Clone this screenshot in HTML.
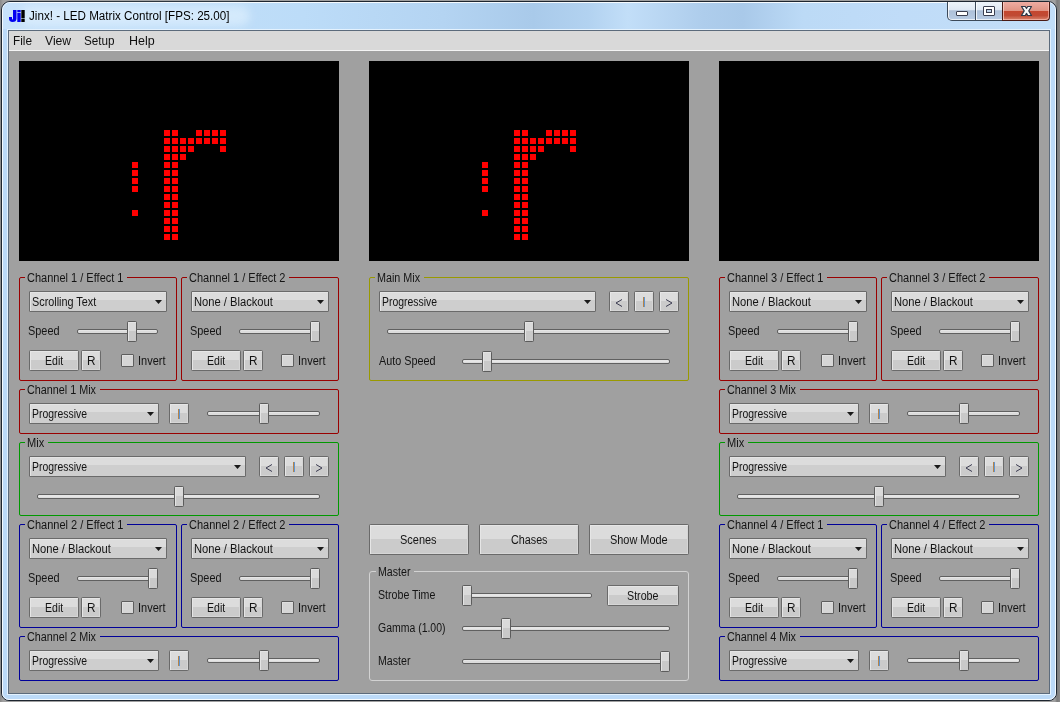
<!DOCTYPE html>
<html><head><meta charset="utf-8"><style>
html,body{margin:0;padding:0;}
body{width:1060px;height:702px;overflow:hidden;position:relative;background:#8c8c8c;font-family:"Liberation Sans",sans-serif;}
.t{position:absolute;white-space:nowrap;line-height:14px;transform-origin:0 0;}
</style></head><body>

<div style="position:absolute;left:0;top:0;width:1060px;height:702px;background:linear-gradient(90deg,#8a8a8a,#a0a0a0 3px,#a0a0a0 1055px,#7c7c7c 1057px,#8a8a8a)"></div>
<div style="position:absolute;left:1px;top:1px;width:1056px;height:700px;box-sizing:border-box;border:1px solid #1e2630;border-radius:9px 9px 8px 8px;background:#bcdaf8;"></div>
<div style="position:absolute;left:2px;top:2px;width:1054px;height:698px;box-sizing:border-box;border:1px solid rgba(255,255,255,0.85);border-radius:8px 8px 7px 7px;"></div>
<div style="position:absolute;left:3px;top:3px;width:1052px;height:26px;border-radius:7px 7px 0 0;background:linear-gradient(90deg,#c8e2fa 0,#bcdcf8 300px,#b4d4f2 440px,#a9caea 530px,#b2d2f0 585px,#c2def8 625px,#aecdec 700px,#a9c9e9 740px,#bcdaf6 800px,#c0dcf8 900px,#c2def8 1054px);"></div>
<div style="position:absolute;left:20px;top:6px;width:230px;height:20px;border-radius:10px;background:rgba(230,244,255,0.55);filter:blur(4px)"></div>
<div style="position:absolute;left:7px;top:29px;width:1044px;height:666px;box-sizing:border-box;border:1px solid #e4f2fe;"></div>
<div style="position:absolute;left:8px;top:30px;width:1042px;height:664px;box-sizing:border-box;border:1px solid #5c6b7c;background:#a0a0a0;"></div>
<div style="position:absolute;left:9px;top:31px;width:1040px;height:19px;background:#d9d9d9;"></div>
<div style="position:absolute;left:9px;top:50px;width:1040px;height:1px;background:#f4f4f4;"></div>
<div class="t" style="left:13.30px;top:34px;font-size:12px;transform:scaleX(0.9825);color:#101010;">File</div>
<div class="t" style="left:45.00px;top:34px;font-size:12px;transform:scaleX(1.0118);color:#101010;">View</div>
<div class="t" style="left:84.30px;top:34px;font-size:12px;transform:scaleX(0.9757);color:#101010;">Setup</div>
<div class="t" style="left:128.50px;top:34px;font-size:12px;transform:scaleX(1.0413);color:#101010;">Help</div>
<svg style="position:absolute;left:0;top:0" width="30" height="26">
<path d="M13,10 H16.5 V18.5 Q16.5,22 12.5,22 Q9,22 9,18.2 V17 H12 V18.2 Q12,19.5 12.7,19.5 Q13,19.5 13,18.2 Z" fill="#0000f0"/>
<rect x="17.3" y="10" width="3.4" height="2.3" fill="#0000f0"/><rect x="17.3" y="13" width="3.4" height="9" fill="#0000f0"/>
<rect x="21.3" y="10" width="3.4" height="8.4" fill="#000"/><rect x="21.3" y="19" width="3.4" height="3" fill="#000"/>
</svg>
<div class="t" style="left:28.70px;top:9px;font-size:12px;transform:scaleX(0.9698);color:#000;">Jinx! - LED Matrix Control [FPS: 25.00]</div>
<div style="position:absolute;left:947px;top:2px;width:56px;height:19px;box-sizing:border-box;border:1px solid #3c4a5a;border-top:none;border-radius:0 0 0 5px;background:linear-gradient(#eef4fa 0,#dfe8f3 45%,#adc0d8 48%,#b8cce4 100%);box-shadow:inset 1px 0 0 rgba(255,255,255,0.8), inset 0 -1px 0 rgba(255,255,255,0.7);"></div>
<div style="position:absolute;left:975px;top:2px;width:1px;height:18px;background:#3c4a5a;"></div>
<div style="position:absolute;left:976px;top:2px;width:1px;height:18px;background:rgba(255,255,255,0.8);"></div>
<div style="position:absolute;left:1002px;top:2px;width:48px;height:19px;box-sizing:border-box;border:1px solid #4a1a14;border-top:none;border-radius:0 0 4px 0;background:linear-gradient(#eeaca2 0,#e09484 48%,#c4462e 50%,#c04a34 75%,#d8846c 100%);box-shadow:inset 1px 0 0 rgba(255,220,210,0.7), inset -1px -1px 0 rgba(255,200,190,0.6);"></div>
<div style="position:absolute;left:956px;top:11px;width:12px;height:5px;box-sizing:border-box;border:1px solid #3a3f50;border-radius:1px;background:#fff;"></div>
<div style="position:absolute;left:983px;top:6px;width:12px;height:10px;box-sizing:border-box;border:1px solid #3a3f50;border-radius:1px;background:#fff;"></div>
<div style="position:absolute;left:986px;top:9px;width:6px;height:4px;box-sizing:border-box;border:1px solid #3a3f50;background:#c0d4ea;"></div>
<svg style="position:absolute;left:1016px;top:2px" width="22" height="18"><path d="M5.5,4.5 L9.3,4.5 L10.5,6.5 L11.7,4.5 L15.5,4.5 L12.8,8.9 L15.5,13.5 L11.7,13.5 L10.5,11.4 L9.3,13.5 L5.5,13.5 L8.2,8.9 Z" fill="#f8f8f8" stroke="#2e3848" stroke-width="1.2" stroke-linejoin="round"/></svg>
<svg style="position:absolute;left:19px;top:61px" width="320" height="200"><rect width="320" height="200" fill="#000"/><g fill="#ff0000"><rect x="145" y="69" width="6" height="6"/><rect x="153" y="69" width="6" height="6"/><rect x="177" y="69" width="6" height="6"/><rect x="185" y="69" width="6" height="6"/><rect x="193" y="69" width="6" height="6"/><rect x="201" y="69" width="6" height="6"/><rect x="145" y="77" width="6" height="6"/><rect x="153" y="77" width="6" height="6"/><rect x="161" y="77" width="6" height="6"/><rect x="169" y="77" width="6" height="6"/><rect x="177" y="77" width="6" height="6"/><rect x="185" y="77" width="6" height="6"/><rect x="193" y="77" width="6" height="6"/><rect x="201" y="77" width="6" height="6"/><rect x="145" y="85" width="6" height="6"/><rect x="153" y="85" width="6" height="6"/><rect x="161" y="85" width="6" height="6"/><rect x="169" y="85" width="6" height="6"/><rect x="201" y="85" width="6" height="6"/><rect x="145" y="93" width="6" height="6"/><rect x="153" y="93" width="6" height="6"/><rect x="161" y="93" width="6" height="6"/><rect x="145" y="101" width="6" height="6"/><rect x="153" y="101" width="6" height="6"/><rect x="113" y="101" width="6" height="6"/><rect x="145" y="109" width="6" height="6"/><rect x="153" y="109" width="6" height="6"/><rect x="113" y="109" width="6" height="6"/><rect x="145" y="117" width="6" height="6"/><rect x="153" y="117" width="6" height="6"/><rect x="113" y="117" width="6" height="6"/><rect x="145" y="125" width="6" height="6"/><rect x="153" y="125" width="6" height="6"/><rect x="113" y="125" width="6" height="6"/><rect x="145" y="133" width="6" height="6"/><rect x="153" y="133" width="6" height="6"/><rect x="145" y="141" width="6" height="6"/><rect x="153" y="141" width="6" height="6"/><rect x="145" y="149" width="6" height="6"/><rect x="153" y="149" width="6" height="6"/><rect x="113" y="149" width="6" height="6"/><rect x="145" y="157" width="6" height="6"/><rect x="153" y="157" width="6" height="6"/><rect x="145" y="165" width="6" height="6"/><rect x="153" y="165" width="6" height="6"/><rect x="145" y="173" width="6" height="6"/><rect x="153" y="173" width="6" height="6"/></g></svg>
<svg style="position:absolute;left:369px;top:61px" width="320" height="200"><rect width="320" height="200" fill="#000"/><g fill="#ff0000"><rect x="145" y="69" width="6" height="6"/><rect x="153" y="69" width="6" height="6"/><rect x="177" y="69" width="6" height="6"/><rect x="185" y="69" width="6" height="6"/><rect x="193" y="69" width="6" height="6"/><rect x="201" y="69" width="6" height="6"/><rect x="145" y="77" width="6" height="6"/><rect x="153" y="77" width="6" height="6"/><rect x="161" y="77" width="6" height="6"/><rect x="169" y="77" width="6" height="6"/><rect x="177" y="77" width="6" height="6"/><rect x="185" y="77" width="6" height="6"/><rect x="193" y="77" width="6" height="6"/><rect x="201" y="77" width="6" height="6"/><rect x="145" y="85" width="6" height="6"/><rect x="153" y="85" width="6" height="6"/><rect x="161" y="85" width="6" height="6"/><rect x="169" y="85" width="6" height="6"/><rect x="201" y="85" width="6" height="6"/><rect x="145" y="93" width="6" height="6"/><rect x="153" y="93" width="6" height="6"/><rect x="161" y="93" width="6" height="6"/><rect x="145" y="101" width="6" height="6"/><rect x="153" y="101" width="6" height="6"/><rect x="113" y="101" width="6" height="6"/><rect x="145" y="109" width="6" height="6"/><rect x="153" y="109" width="6" height="6"/><rect x="113" y="109" width="6" height="6"/><rect x="145" y="117" width="6" height="6"/><rect x="153" y="117" width="6" height="6"/><rect x="113" y="117" width="6" height="6"/><rect x="145" y="125" width="6" height="6"/><rect x="153" y="125" width="6" height="6"/><rect x="113" y="125" width="6" height="6"/><rect x="145" y="133" width="6" height="6"/><rect x="153" y="133" width="6" height="6"/><rect x="145" y="141" width="6" height="6"/><rect x="153" y="141" width="6" height="6"/><rect x="145" y="149" width="6" height="6"/><rect x="153" y="149" width="6" height="6"/><rect x="113" y="149" width="6" height="6"/><rect x="145" y="157" width="6" height="6"/><rect x="153" y="157" width="6" height="6"/><rect x="145" y="165" width="6" height="6"/><rect x="153" y="165" width="6" height="6"/><rect x="145" y="173" width="6" height="6"/><rect x="153" y="173" width="6" height="6"/></g></svg>
<svg style="position:absolute;left:719px;top:61px" width="320" height="200"><rect width="320" height="200" fill="#000"/><g fill="#ff0000"></g></svg>
<div style="position:absolute;left:19px;top:277px;width:158px;height:104px;box-sizing:border-box;border:1px solid #990000;border-radius:2px;"></div>
<div style="position:absolute;left:25px;top:276px;width:102px;height:3px;background:#a0a0a0"></div>
<div class="t" style="left:27.00px;top:271px;font-size:12px;transform:scaleX(0.9174);color:#141414;">Channel 1 / Effect 1</div>
<div style="position:absolute;left:29px;top:291px;width:138px;height:21px;box-sizing:border-box;border:1px solid #6a6a6a;border-radius:1px;background:linear-gradient(#dcdcdc 0,#dcdcdc 8px,#cecece 8px,#cecece 100%);box-shadow:inset 1px 1px 0 #e4e4e4;"></div>
<div class="t" style="left:32.00px;top:295px;font-size:12px;transform:scaleX(0.9023);color:#141414;">Scrolling Text</div>
<svg style="position:absolute;left:155px;top:300px" width="7" height="4"><path d="M0,0 H7 L3.5,4 Z" fill="#1a1a1a"/></svg>
<div class="t" style="left:28.00px;top:324px;font-size:12px;transform:scaleX(0.9078);color:#141414;">Speed</div>
<div style="position:absolute;left:77px;top:329px;width:81px;height:5px;box-sizing:border-box;border:1px solid #606060;border-radius:2px;background:linear-gradient(#e6e6e6 0,#e6e6e6 50%,#dcdcdc 50%);"></div>
<div style="position:absolute;left:127px;top:321px;width:10px;height:21px;box-sizing:border-box;border:1px solid #5c5c5c;border-radius:1.5px;background:linear-gradient(#dadada 0,#dadada 9px,#c9c9c9 9px);box-shadow:inset 1px 1px 0 #e4e4e4;"></div>
<div style="position:absolute;left:29px;top:350px;width:50px;height:21px;box-sizing:border-box;border:1px solid #6a6a6a;border-radius:1.5px;background:linear-gradient(#dcdcdc 0,#dcdcdc 9px,#cbcbcb 9px,#cbcbcb 100%);box-shadow:inset 1px 1px 0 #e6e6e6, inset -1px -1px 0 #d6d6d6;"></div>
<div class="t" style="left:44.65px;top:354px;font-size:12px;transform:scaleX(0.8801);color:#141414;">Edit</div>
<div style="position:absolute;left:81px;top:350px;width:20px;height:21px;box-sizing:border-box;border:1px solid #6a6a6a;border-radius:1.5px;background:linear-gradient(#dcdcdc 0,#dcdcdc 9px,#cbcbcb 9px,#cbcbcb 100%);box-shadow:inset 1px 1px 0 #e6e6e6, inset -1px -1px 0 #d6d6d6;"></div>
<div class="t" style="left:86.50px;top:354px;font-size:12px;transform:scaleX(0.9808);color:#141414;">R</div>
<div style="position:absolute;left:121px;top:354px;width:13px;height:13px;box-sizing:border-box;border:1px solid #5e5e5e;border-radius:1px;background:#d6d6d6;box-shadow:inset 1px 1px 0 #e0e0e0;"></div>
<div class="t" style="left:138.00px;top:354px;font-size:12px;transform:scaleX(0.9163);color:#141414;">Invert</div>
<div style="position:absolute;left:181px;top:277px;width:158px;height:104px;box-sizing:border-box;border:1px solid #990000;border-radius:2px;"></div>
<div style="position:absolute;left:187px;top:276px;width:102px;height:3px;background:#a0a0a0"></div>
<div class="t" style="left:189.00px;top:271px;font-size:12px;transform:scaleX(0.9174);color:#141414;">Channel 1 / Effect 2</div>
<div style="position:absolute;left:191px;top:291px;width:138px;height:21px;box-sizing:border-box;border:1px solid #6a6a6a;border-radius:1px;background:linear-gradient(#dcdcdc 0,#dcdcdc 8px,#cecece 8px,#cecece 100%);box-shadow:inset 1px 1px 0 #e4e4e4;"></div>
<div class="t" style="left:194.00px;top:295px;font-size:12px;transform:scaleX(0.9313);color:#141414;">None / Blackout</div>
<svg style="position:absolute;left:317px;top:300px" width="7" height="4"><path d="M0,0 H7 L3.5,4 Z" fill="#1a1a1a"/></svg>
<div class="t" style="left:190.00px;top:324px;font-size:12px;transform:scaleX(0.9078);color:#141414;">Speed</div>
<div style="position:absolute;left:239px;top:329px;width:81px;height:5px;box-sizing:border-box;border:1px solid #606060;border-radius:2px;background:linear-gradient(#e6e6e6 0,#e6e6e6 50%,#dcdcdc 50%);"></div>
<div style="position:absolute;left:310px;top:321px;width:10px;height:21px;box-sizing:border-box;border:1px solid #5c5c5c;border-radius:1.5px;background:linear-gradient(#dadada 0,#dadada 9px,#c9c9c9 9px);box-shadow:inset 1px 1px 0 #e4e4e4;"></div>
<div style="position:absolute;left:191px;top:350px;width:50px;height:21px;box-sizing:border-box;border:1px solid #6a6a6a;border-radius:1.5px;background:linear-gradient(#dcdcdc 0,#dcdcdc 9px,#cbcbcb 9px,#cbcbcb 100%);box-shadow:inset 1px 1px 0 #e6e6e6, inset -1px -1px 0 #d6d6d6;"></div>
<div class="t" style="left:206.65px;top:354px;font-size:12px;transform:scaleX(0.8801);color:#141414;">Edit</div>
<div style="position:absolute;left:243px;top:350px;width:20px;height:21px;box-sizing:border-box;border:1px solid #6a6a6a;border-radius:1.5px;background:linear-gradient(#dcdcdc 0,#dcdcdc 9px,#cbcbcb 9px,#cbcbcb 100%);box-shadow:inset 1px 1px 0 #e6e6e6, inset -1px -1px 0 #d6d6d6;"></div>
<div class="t" style="left:248.50px;top:354px;font-size:12px;transform:scaleX(0.9808);color:#141414;">R</div>
<div style="position:absolute;left:281px;top:354px;width:13px;height:13px;box-sizing:border-box;border:1px solid #5e5e5e;border-radius:1px;background:#d6d6d6;box-shadow:inset 1px 1px 0 #e0e0e0;"></div>
<div class="t" style="left:298.00px;top:354px;font-size:12px;transform:scaleX(0.9163);color:#141414;">Invert</div>
<div style="position:absolute;left:19px;top:389px;width:320px;height:45px;box-sizing:border-box;border:1px solid #990000;border-radius:2px;"></div>
<div style="position:absolute;left:25px;top:388px;width:74.5px;height:3px;background:#a0a0a0"></div>
<div class="t" style="left:27.00px;top:383px;font-size:12px;transform:scaleX(0.8995);color:#141414;">Channel 1 Mix</div>
<div style="position:absolute;left:29px;top:403px;width:130px;height:21px;box-sizing:border-box;border:1px solid #6a6a6a;border-radius:1px;background:linear-gradient(#dcdcdc 0,#dcdcdc 8px,#cecece 8px,#cecece 100%);box-shadow:inset 1px 1px 0 #e4e4e4;"></div>
<div class="t" style="left:32.00px;top:407px;font-size:12px;transform:scaleX(0.8681);color:#141414;">Progressive</div>
<svg style="position:absolute;left:147px;top:412px" width="7" height="4"><path d="M0,0 H7 L3.5,4 Z" fill="#1a1a1a"/></svg>
<div style="position:absolute;left:169px;top:403px;width:20px;height:21px;box-sizing:border-box;border:1px solid #6a6a6a;border-radius:1.5px;background:linear-gradient(#dcdcdc 0,#dcdcdc 9px,#cbcbcb 9px,#cbcbcb 100%);box-shadow:inset 1px 1px 0 #e6e6e6, inset -1px -1px 0 #d6d6d6;"></div>
<div style="position:absolute;left:178px;top:409px;width:1px;height:10px;box-sizing:border-box;background:#b88446;"></div>
<div style="position:absolute;left:179px;top:409px;width:1px;height:10px;box-sizing:border-box;background:#5e96d6;"></div>
<div style="position:absolute;left:207px;top:411px;width:113px;height:5px;box-sizing:border-box;border:1px solid #606060;border-radius:2px;background:linear-gradient(#e6e6e6 0,#e6e6e6 50%,#dcdcdc 50%);"></div>
<div style="position:absolute;left:259px;top:403px;width:10px;height:21px;box-sizing:border-box;border:1px solid #5c5c5c;border-radius:1.5px;background:linear-gradient(#dadada 0,#dadada 9px,#c9c9c9 9px);box-shadow:inset 1px 1px 0 #e4e4e4;"></div>
<div style="position:absolute;left:19px;top:442px;width:320px;height:74px;box-sizing:border-box;border:1px solid #009900;border-radius:2px;"></div>
<div style="position:absolute;left:25px;top:441px;width:22.7px;height:3px;background:#a0a0a0"></div>
<div class="t" style="left:27.00px;top:436px;font-size:12px;transform:scaleX(0.9216);color:#141414;">Mix</div>
<div style="position:absolute;left:29px;top:456px;width:217px;height:21px;box-sizing:border-box;border:1px solid #6a6a6a;border-radius:1px;background:linear-gradient(#dcdcdc 0,#dcdcdc 8px,#cecece 8px,#cecece 100%);box-shadow:inset 1px 1px 0 #e4e4e4;"></div>
<div class="t" style="left:32.00px;top:460px;font-size:12px;transform:scaleX(0.8681);color:#141414;">Progressive</div>
<svg style="position:absolute;left:234px;top:465px" width="7" height="4"><path d="M0,0 H7 L3.5,4 Z" fill="#1a1a1a"/></svg>
<div style="position:absolute;left:259px;top:456px;width:20px;height:21px;box-sizing:border-box;border:1px solid #6a6a6a;border-radius:1.5px;background:linear-gradient(#dcdcdc 0,#dcdcdc 9px,#cbcbcb 9px,#cbcbcb 100%);box-shadow:inset 1px 1px 0 #e6e6e6, inset -1px -1px 0 #d6d6d6;"></div>
<svg style="position:absolute;left:0;top:0;overflow:visible" width="1" height="1"><path d="M272.0,464.5 L266.0,468.0 L272.0,471.5" fill="none" stroke="#3a3a50" stroke-width="1"/></svg>
<div style="position:absolute;left:284px;top:456px;width:20px;height:21px;box-sizing:border-box;border:1px solid #6a6a6a;border-radius:1.5px;background:linear-gradient(#dcdcdc 0,#dcdcdc 9px,#cbcbcb 9px,#cbcbcb 100%);box-shadow:inset 1px 1px 0 #e6e6e6, inset -1px -1px 0 #d6d6d6;"></div>
<div style="position:absolute;left:293px;top:462px;width:1px;height:10px;box-sizing:border-box;background:#b88446;"></div>
<div style="position:absolute;left:294px;top:462px;width:1px;height:10px;box-sizing:border-box;background:#5e96d6;"></div>
<div style="position:absolute;left:309px;top:456px;width:20px;height:21px;box-sizing:border-box;border:1px solid #6a6a6a;border-radius:1.5px;background:linear-gradient(#dcdcdc 0,#dcdcdc 9px,#cbcbcb 9px,#cbcbcb 100%);box-shadow:inset 1px 1px 0 #e6e6e6, inset -1px -1px 0 #d6d6d6;"></div>
<svg style="position:absolute;left:0;top:0;overflow:visible" width="1" height="1"><path d="M316.0,464.5 L322.0,468.0 L316.0,471.5" fill="none" stroke="#3a3a50" stroke-width="1"/></svg>
<div style="position:absolute;left:37px;top:494px;width:283px;height:5px;box-sizing:border-box;border:1px solid #606060;border-radius:2px;background:linear-gradient(#e6e6e6 0,#e6e6e6 50%,#dcdcdc 50%);"></div>
<div style="position:absolute;left:174px;top:486px;width:10px;height:21px;box-sizing:border-box;border:1px solid #5c5c5c;border-radius:1.5px;background:linear-gradient(#dadada 0,#dadada 9px,#c9c9c9 9px);box-shadow:inset 1px 1px 0 #e4e4e4;"></div>
<div style="position:absolute;left:19px;top:524px;width:158px;height:104px;box-sizing:border-box;border:1px solid #000099;border-radius:2px;"></div>
<div style="position:absolute;left:25px;top:523px;width:102px;height:3px;background:#a0a0a0"></div>
<div class="t" style="left:27.00px;top:518px;font-size:12px;transform:scaleX(0.9174);color:#141414;">Channel 2 / Effect 1</div>
<div style="position:absolute;left:29px;top:538px;width:138px;height:21px;box-sizing:border-box;border:1px solid #6a6a6a;border-radius:1px;background:linear-gradient(#dcdcdc 0,#dcdcdc 8px,#cecece 8px,#cecece 100%);box-shadow:inset 1px 1px 0 #e4e4e4;"></div>
<div class="t" style="left:32.00px;top:542px;font-size:12px;transform:scaleX(0.9313);color:#141414;">None / Blackout</div>
<svg style="position:absolute;left:155px;top:547px" width="7" height="4"><path d="M0,0 H7 L3.5,4 Z" fill="#1a1a1a"/></svg>
<div class="t" style="left:28.00px;top:571px;font-size:12px;transform:scaleX(0.9078);color:#141414;">Speed</div>
<div style="position:absolute;left:77px;top:576px;width:81px;height:5px;box-sizing:border-box;border:1px solid #606060;border-radius:2px;background:linear-gradient(#e6e6e6 0,#e6e6e6 50%,#dcdcdc 50%);"></div>
<div style="position:absolute;left:148px;top:568px;width:10px;height:21px;box-sizing:border-box;border:1px solid #5c5c5c;border-radius:1.5px;background:linear-gradient(#dadada 0,#dadada 9px,#c9c9c9 9px);box-shadow:inset 1px 1px 0 #e4e4e4;"></div>
<div style="position:absolute;left:29px;top:597px;width:50px;height:21px;box-sizing:border-box;border:1px solid #6a6a6a;border-radius:1.5px;background:linear-gradient(#dcdcdc 0,#dcdcdc 9px,#cbcbcb 9px,#cbcbcb 100%);box-shadow:inset 1px 1px 0 #e6e6e6, inset -1px -1px 0 #d6d6d6;"></div>
<div class="t" style="left:44.65px;top:601px;font-size:12px;transform:scaleX(0.8801);color:#141414;">Edit</div>
<div style="position:absolute;left:81px;top:597px;width:20px;height:21px;box-sizing:border-box;border:1px solid #6a6a6a;border-radius:1.5px;background:linear-gradient(#dcdcdc 0,#dcdcdc 9px,#cbcbcb 9px,#cbcbcb 100%);box-shadow:inset 1px 1px 0 #e6e6e6, inset -1px -1px 0 #d6d6d6;"></div>
<div class="t" style="left:86.50px;top:601px;font-size:12px;transform:scaleX(0.9808);color:#141414;">R</div>
<div style="position:absolute;left:121px;top:601px;width:13px;height:13px;box-sizing:border-box;border:1px solid #5e5e5e;border-radius:1px;background:#d6d6d6;box-shadow:inset 1px 1px 0 #e0e0e0;"></div>
<div class="t" style="left:138.00px;top:601px;font-size:12px;transform:scaleX(0.9163);color:#141414;">Invert</div>
<div style="position:absolute;left:181px;top:524px;width:158px;height:104px;box-sizing:border-box;border:1px solid #000099;border-radius:2px;"></div>
<div style="position:absolute;left:187px;top:523px;width:102px;height:3px;background:#a0a0a0"></div>
<div class="t" style="left:189.00px;top:518px;font-size:12px;transform:scaleX(0.9174);color:#141414;">Channel 2 / Effect 2</div>
<div style="position:absolute;left:191px;top:538px;width:138px;height:21px;box-sizing:border-box;border:1px solid #6a6a6a;border-radius:1px;background:linear-gradient(#dcdcdc 0,#dcdcdc 8px,#cecece 8px,#cecece 100%);box-shadow:inset 1px 1px 0 #e4e4e4;"></div>
<div class="t" style="left:194.00px;top:542px;font-size:12px;transform:scaleX(0.9313);color:#141414;">None / Blackout</div>
<svg style="position:absolute;left:317px;top:547px" width="7" height="4"><path d="M0,0 H7 L3.5,4 Z" fill="#1a1a1a"/></svg>
<div class="t" style="left:190.00px;top:571px;font-size:12px;transform:scaleX(0.9078);color:#141414;">Speed</div>
<div style="position:absolute;left:239px;top:576px;width:81px;height:5px;box-sizing:border-box;border:1px solid #606060;border-radius:2px;background:linear-gradient(#e6e6e6 0,#e6e6e6 50%,#dcdcdc 50%);"></div>
<div style="position:absolute;left:310px;top:568px;width:10px;height:21px;box-sizing:border-box;border:1px solid #5c5c5c;border-radius:1.5px;background:linear-gradient(#dadada 0,#dadada 9px,#c9c9c9 9px);box-shadow:inset 1px 1px 0 #e4e4e4;"></div>
<div style="position:absolute;left:191px;top:597px;width:50px;height:21px;box-sizing:border-box;border:1px solid #6a6a6a;border-radius:1.5px;background:linear-gradient(#dcdcdc 0,#dcdcdc 9px,#cbcbcb 9px,#cbcbcb 100%);box-shadow:inset 1px 1px 0 #e6e6e6, inset -1px -1px 0 #d6d6d6;"></div>
<div class="t" style="left:206.65px;top:601px;font-size:12px;transform:scaleX(0.8801);color:#141414;">Edit</div>
<div style="position:absolute;left:243px;top:597px;width:20px;height:21px;box-sizing:border-box;border:1px solid #6a6a6a;border-radius:1.5px;background:linear-gradient(#dcdcdc 0,#dcdcdc 9px,#cbcbcb 9px,#cbcbcb 100%);box-shadow:inset 1px 1px 0 #e6e6e6, inset -1px -1px 0 #d6d6d6;"></div>
<div class="t" style="left:248.50px;top:601px;font-size:12px;transform:scaleX(0.9808);color:#141414;">R</div>
<div style="position:absolute;left:281px;top:601px;width:13px;height:13px;box-sizing:border-box;border:1px solid #5e5e5e;border-radius:1px;background:#d6d6d6;box-shadow:inset 1px 1px 0 #e0e0e0;"></div>
<div class="t" style="left:298.00px;top:601px;font-size:12px;transform:scaleX(0.9163);color:#141414;">Invert</div>
<div style="position:absolute;left:19px;top:636px;width:320px;height:45px;box-sizing:border-box;border:1px solid #000099;border-radius:2px;"></div>
<div style="position:absolute;left:25px;top:635px;width:74.5px;height:3px;background:#a0a0a0"></div>
<div class="t" style="left:27.00px;top:630px;font-size:12px;transform:scaleX(0.8995);color:#141414;">Channel 2 Mix</div>
<div style="position:absolute;left:29px;top:650px;width:130px;height:21px;box-sizing:border-box;border:1px solid #6a6a6a;border-radius:1px;background:linear-gradient(#dcdcdc 0,#dcdcdc 8px,#cecece 8px,#cecece 100%);box-shadow:inset 1px 1px 0 #e4e4e4;"></div>
<div class="t" style="left:32.00px;top:654px;font-size:12px;transform:scaleX(0.8681);color:#141414;">Progressive</div>
<svg style="position:absolute;left:147px;top:659px" width="7" height="4"><path d="M0,0 H7 L3.5,4 Z" fill="#1a1a1a"/></svg>
<div style="position:absolute;left:169px;top:650px;width:20px;height:21px;box-sizing:border-box;border:1px solid #6a6a6a;border-radius:1.5px;background:linear-gradient(#dcdcdc 0,#dcdcdc 9px,#cbcbcb 9px,#cbcbcb 100%);box-shadow:inset 1px 1px 0 #e6e6e6, inset -1px -1px 0 #d6d6d6;"></div>
<div style="position:absolute;left:178px;top:656px;width:1px;height:10px;box-sizing:border-box;background:#b88446;"></div>
<div style="position:absolute;left:179px;top:656px;width:1px;height:10px;box-sizing:border-box;background:#5e96d6;"></div>
<div style="position:absolute;left:207px;top:658px;width:113px;height:5px;box-sizing:border-box;border:1px solid #606060;border-radius:2px;background:linear-gradient(#e6e6e6 0,#e6e6e6 50%,#dcdcdc 50%);"></div>
<div style="position:absolute;left:259px;top:650px;width:10px;height:21px;box-sizing:border-box;border:1px solid #5c5c5c;border-radius:1.5px;background:linear-gradient(#dadada 0,#dadada 9px,#c9c9c9 9px);box-shadow:inset 1px 1px 0 #e4e4e4;"></div>
<div style="position:absolute;left:719px;top:277px;width:158px;height:104px;box-sizing:border-box;border:1px solid #990000;border-radius:2px;"></div>
<div style="position:absolute;left:725px;top:276px;width:102px;height:3px;background:#a0a0a0"></div>
<div class="t" style="left:727.00px;top:271px;font-size:12px;transform:scaleX(0.9174);color:#141414;">Channel 3 / Effect 1</div>
<div style="position:absolute;left:729px;top:291px;width:138px;height:21px;box-sizing:border-box;border:1px solid #6a6a6a;border-radius:1px;background:linear-gradient(#dcdcdc 0,#dcdcdc 8px,#cecece 8px,#cecece 100%);box-shadow:inset 1px 1px 0 #e4e4e4;"></div>
<div class="t" style="left:732.00px;top:295px;font-size:12px;transform:scaleX(0.9313);color:#141414;">None / Blackout</div>
<svg style="position:absolute;left:855px;top:300px" width="7" height="4"><path d="M0,0 H7 L3.5,4 Z" fill="#1a1a1a"/></svg>
<div class="t" style="left:728.00px;top:324px;font-size:12px;transform:scaleX(0.9078);color:#141414;">Speed</div>
<div style="position:absolute;left:777px;top:329px;width:81px;height:5px;box-sizing:border-box;border:1px solid #606060;border-radius:2px;background:linear-gradient(#e6e6e6 0,#e6e6e6 50%,#dcdcdc 50%);"></div>
<div style="position:absolute;left:848px;top:321px;width:10px;height:21px;box-sizing:border-box;border:1px solid #5c5c5c;border-radius:1.5px;background:linear-gradient(#dadada 0,#dadada 9px,#c9c9c9 9px);box-shadow:inset 1px 1px 0 #e4e4e4;"></div>
<div style="position:absolute;left:729px;top:350px;width:50px;height:21px;box-sizing:border-box;border:1px solid #6a6a6a;border-radius:1.5px;background:linear-gradient(#dcdcdc 0,#dcdcdc 9px,#cbcbcb 9px,#cbcbcb 100%);box-shadow:inset 1px 1px 0 #e6e6e6, inset -1px -1px 0 #d6d6d6;"></div>
<div class="t" style="left:744.65px;top:354px;font-size:12px;transform:scaleX(0.8801);color:#141414;">Edit</div>
<div style="position:absolute;left:781px;top:350px;width:20px;height:21px;box-sizing:border-box;border:1px solid #6a6a6a;border-radius:1.5px;background:linear-gradient(#dcdcdc 0,#dcdcdc 9px,#cbcbcb 9px,#cbcbcb 100%);box-shadow:inset 1px 1px 0 #e6e6e6, inset -1px -1px 0 #d6d6d6;"></div>
<div class="t" style="left:786.50px;top:354px;font-size:12px;transform:scaleX(0.9808);color:#141414;">R</div>
<div style="position:absolute;left:821px;top:354px;width:13px;height:13px;box-sizing:border-box;border:1px solid #5e5e5e;border-radius:1px;background:#d6d6d6;box-shadow:inset 1px 1px 0 #e0e0e0;"></div>
<div class="t" style="left:838.00px;top:354px;font-size:12px;transform:scaleX(0.9163);color:#141414;">Invert</div>
<div style="position:absolute;left:881px;top:277px;width:158px;height:104px;box-sizing:border-box;border:1px solid #990000;border-radius:2px;"></div>
<div style="position:absolute;left:887px;top:276px;width:102px;height:3px;background:#a0a0a0"></div>
<div class="t" style="left:889.00px;top:271px;font-size:12px;transform:scaleX(0.9174);color:#141414;">Channel 3 / Effect 2</div>
<div style="position:absolute;left:891px;top:291px;width:138px;height:21px;box-sizing:border-box;border:1px solid #6a6a6a;border-radius:1px;background:linear-gradient(#dcdcdc 0,#dcdcdc 8px,#cecece 8px,#cecece 100%);box-shadow:inset 1px 1px 0 #e4e4e4;"></div>
<div class="t" style="left:894.00px;top:295px;font-size:12px;transform:scaleX(0.9313);color:#141414;">None / Blackout</div>
<svg style="position:absolute;left:1017px;top:300px" width="7" height="4"><path d="M0,0 H7 L3.5,4 Z" fill="#1a1a1a"/></svg>
<div class="t" style="left:890.00px;top:324px;font-size:12px;transform:scaleX(0.9078);color:#141414;">Speed</div>
<div style="position:absolute;left:939px;top:329px;width:81px;height:5px;box-sizing:border-box;border:1px solid #606060;border-radius:2px;background:linear-gradient(#e6e6e6 0,#e6e6e6 50%,#dcdcdc 50%);"></div>
<div style="position:absolute;left:1010px;top:321px;width:10px;height:21px;box-sizing:border-box;border:1px solid #5c5c5c;border-radius:1.5px;background:linear-gradient(#dadada 0,#dadada 9px,#c9c9c9 9px);box-shadow:inset 1px 1px 0 #e4e4e4;"></div>
<div style="position:absolute;left:891px;top:350px;width:50px;height:21px;box-sizing:border-box;border:1px solid #6a6a6a;border-radius:1.5px;background:linear-gradient(#dcdcdc 0,#dcdcdc 9px,#cbcbcb 9px,#cbcbcb 100%);box-shadow:inset 1px 1px 0 #e6e6e6, inset -1px -1px 0 #d6d6d6;"></div>
<div class="t" style="left:906.65px;top:354px;font-size:12px;transform:scaleX(0.8801);color:#141414;">Edit</div>
<div style="position:absolute;left:943px;top:350px;width:20px;height:21px;box-sizing:border-box;border:1px solid #6a6a6a;border-radius:1.5px;background:linear-gradient(#dcdcdc 0,#dcdcdc 9px,#cbcbcb 9px,#cbcbcb 100%);box-shadow:inset 1px 1px 0 #e6e6e6, inset -1px -1px 0 #d6d6d6;"></div>
<div class="t" style="left:948.50px;top:354px;font-size:12px;transform:scaleX(0.9808);color:#141414;">R</div>
<div style="position:absolute;left:981px;top:354px;width:13px;height:13px;box-sizing:border-box;border:1px solid #5e5e5e;border-radius:1px;background:#d6d6d6;box-shadow:inset 1px 1px 0 #e0e0e0;"></div>
<div class="t" style="left:998.00px;top:354px;font-size:12px;transform:scaleX(0.9163);color:#141414;">Invert</div>
<div style="position:absolute;left:719px;top:389px;width:320px;height:45px;box-sizing:border-box;border:1px solid #990000;border-radius:2px;"></div>
<div style="position:absolute;left:725px;top:388px;width:74.5px;height:3px;background:#a0a0a0"></div>
<div class="t" style="left:727.00px;top:383px;font-size:12px;transform:scaleX(0.8995);color:#141414;">Channel 3 Mix</div>
<div style="position:absolute;left:729px;top:403px;width:130px;height:21px;box-sizing:border-box;border:1px solid #6a6a6a;border-radius:1px;background:linear-gradient(#dcdcdc 0,#dcdcdc 8px,#cecece 8px,#cecece 100%);box-shadow:inset 1px 1px 0 #e4e4e4;"></div>
<div class="t" style="left:732.00px;top:407px;font-size:12px;transform:scaleX(0.8681);color:#141414;">Progressive</div>
<svg style="position:absolute;left:847px;top:412px" width="7" height="4"><path d="M0,0 H7 L3.5,4 Z" fill="#1a1a1a"/></svg>
<div style="position:absolute;left:869px;top:403px;width:20px;height:21px;box-sizing:border-box;border:1px solid #6a6a6a;border-radius:1.5px;background:linear-gradient(#dcdcdc 0,#dcdcdc 9px,#cbcbcb 9px,#cbcbcb 100%);box-shadow:inset 1px 1px 0 #e6e6e6, inset -1px -1px 0 #d6d6d6;"></div>
<div style="position:absolute;left:878px;top:409px;width:1px;height:10px;box-sizing:border-box;background:#b88446;"></div>
<div style="position:absolute;left:879px;top:409px;width:1px;height:10px;box-sizing:border-box;background:#5e96d6;"></div>
<div style="position:absolute;left:907px;top:411px;width:113px;height:5px;box-sizing:border-box;border:1px solid #606060;border-radius:2px;background:linear-gradient(#e6e6e6 0,#e6e6e6 50%,#dcdcdc 50%);"></div>
<div style="position:absolute;left:959px;top:403px;width:10px;height:21px;box-sizing:border-box;border:1px solid #5c5c5c;border-radius:1.5px;background:linear-gradient(#dadada 0,#dadada 9px,#c9c9c9 9px);box-shadow:inset 1px 1px 0 #e4e4e4;"></div>
<div style="position:absolute;left:719px;top:442px;width:320px;height:74px;box-sizing:border-box;border:1px solid #009900;border-radius:2px;"></div>
<div style="position:absolute;left:725px;top:441px;width:22.7px;height:3px;background:#a0a0a0"></div>
<div class="t" style="left:727.00px;top:436px;font-size:12px;transform:scaleX(0.9216);color:#141414;">Mix</div>
<div style="position:absolute;left:729px;top:456px;width:217px;height:21px;box-sizing:border-box;border:1px solid #6a6a6a;border-radius:1px;background:linear-gradient(#dcdcdc 0,#dcdcdc 8px,#cecece 8px,#cecece 100%);box-shadow:inset 1px 1px 0 #e4e4e4;"></div>
<div class="t" style="left:732.00px;top:460px;font-size:12px;transform:scaleX(0.8681);color:#141414;">Progressive</div>
<svg style="position:absolute;left:934px;top:465px" width="7" height="4"><path d="M0,0 H7 L3.5,4 Z" fill="#1a1a1a"/></svg>
<div style="position:absolute;left:959px;top:456px;width:20px;height:21px;box-sizing:border-box;border:1px solid #6a6a6a;border-radius:1.5px;background:linear-gradient(#dcdcdc 0,#dcdcdc 9px,#cbcbcb 9px,#cbcbcb 100%);box-shadow:inset 1px 1px 0 #e6e6e6, inset -1px -1px 0 #d6d6d6;"></div>
<svg style="position:absolute;left:0;top:0;overflow:visible" width="1" height="1"><path d="M972.0,464.5 L966.0,468.0 L972.0,471.5" fill="none" stroke="#3a3a50" stroke-width="1"/></svg>
<div style="position:absolute;left:984px;top:456px;width:20px;height:21px;box-sizing:border-box;border:1px solid #6a6a6a;border-radius:1.5px;background:linear-gradient(#dcdcdc 0,#dcdcdc 9px,#cbcbcb 9px,#cbcbcb 100%);box-shadow:inset 1px 1px 0 #e6e6e6, inset -1px -1px 0 #d6d6d6;"></div>
<div style="position:absolute;left:993px;top:462px;width:1px;height:10px;box-sizing:border-box;background:#b88446;"></div>
<div style="position:absolute;left:994px;top:462px;width:1px;height:10px;box-sizing:border-box;background:#5e96d6;"></div>
<div style="position:absolute;left:1009px;top:456px;width:20px;height:21px;box-sizing:border-box;border:1px solid #6a6a6a;border-radius:1.5px;background:linear-gradient(#dcdcdc 0,#dcdcdc 9px,#cbcbcb 9px,#cbcbcb 100%);box-shadow:inset 1px 1px 0 #e6e6e6, inset -1px -1px 0 #d6d6d6;"></div>
<svg style="position:absolute;left:0;top:0;overflow:visible" width="1" height="1"><path d="M1016.0,464.5 L1022.0,468.0 L1016.0,471.5" fill="none" stroke="#3a3a50" stroke-width="1"/></svg>
<div style="position:absolute;left:737px;top:494px;width:283px;height:5px;box-sizing:border-box;border:1px solid #606060;border-radius:2px;background:linear-gradient(#e6e6e6 0,#e6e6e6 50%,#dcdcdc 50%);"></div>
<div style="position:absolute;left:874px;top:486px;width:10px;height:21px;box-sizing:border-box;border:1px solid #5c5c5c;border-radius:1.5px;background:linear-gradient(#dadada 0,#dadada 9px,#c9c9c9 9px);box-shadow:inset 1px 1px 0 #e4e4e4;"></div>
<div style="position:absolute;left:719px;top:524px;width:158px;height:104px;box-sizing:border-box;border:1px solid #000099;border-radius:2px;"></div>
<div style="position:absolute;left:725px;top:523px;width:102px;height:3px;background:#a0a0a0"></div>
<div class="t" style="left:727.00px;top:518px;font-size:12px;transform:scaleX(0.9174);color:#141414;">Channel 4 / Effect 1</div>
<div style="position:absolute;left:729px;top:538px;width:138px;height:21px;box-sizing:border-box;border:1px solid #6a6a6a;border-radius:1px;background:linear-gradient(#dcdcdc 0,#dcdcdc 8px,#cecece 8px,#cecece 100%);box-shadow:inset 1px 1px 0 #e4e4e4;"></div>
<div class="t" style="left:732.00px;top:542px;font-size:12px;transform:scaleX(0.9313);color:#141414;">None / Blackout</div>
<svg style="position:absolute;left:855px;top:547px" width="7" height="4"><path d="M0,0 H7 L3.5,4 Z" fill="#1a1a1a"/></svg>
<div class="t" style="left:728.00px;top:571px;font-size:12px;transform:scaleX(0.9078);color:#141414;">Speed</div>
<div style="position:absolute;left:777px;top:576px;width:81px;height:5px;box-sizing:border-box;border:1px solid #606060;border-radius:2px;background:linear-gradient(#e6e6e6 0,#e6e6e6 50%,#dcdcdc 50%);"></div>
<div style="position:absolute;left:848px;top:568px;width:10px;height:21px;box-sizing:border-box;border:1px solid #5c5c5c;border-radius:1.5px;background:linear-gradient(#dadada 0,#dadada 9px,#c9c9c9 9px);box-shadow:inset 1px 1px 0 #e4e4e4;"></div>
<div style="position:absolute;left:729px;top:597px;width:50px;height:21px;box-sizing:border-box;border:1px solid #6a6a6a;border-radius:1.5px;background:linear-gradient(#dcdcdc 0,#dcdcdc 9px,#cbcbcb 9px,#cbcbcb 100%);box-shadow:inset 1px 1px 0 #e6e6e6, inset -1px -1px 0 #d6d6d6;"></div>
<div class="t" style="left:744.65px;top:601px;font-size:12px;transform:scaleX(0.8801);color:#141414;">Edit</div>
<div style="position:absolute;left:781px;top:597px;width:20px;height:21px;box-sizing:border-box;border:1px solid #6a6a6a;border-radius:1.5px;background:linear-gradient(#dcdcdc 0,#dcdcdc 9px,#cbcbcb 9px,#cbcbcb 100%);box-shadow:inset 1px 1px 0 #e6e6e6, inset -1px -1px 0 #d6d6d6;"></div>
<div class="t" style="left:786.50px;top:601px;font-size:12px;transform:scaleX(0.9808);color:#141414;">R</div>
<div style="position:absolute;left:821px;top:601px;width:13px;height:13px;box-sizing:border-box;border:1px solid #5e5e5e;border-radius:1px;background:#d6d6d6;box-shadow:inset 1px 1px 0 #e0e0e0;"></div>
<div class="t" style="left:838.00px;top:601px;font-size:12px;transform:scaleX(0.9163);color:#141414;">Invert</div>
<div style="position:absolute;left:881px;top:524px;width:158px;height:104px;box-sizing:border-box;border:1px solid #000099;border-radius:2px;"></div>
<div style="position:absolute;left:887px;top:523px;width:102px;height:3px;background:#a0a0a0"></div>
<div class="t" style="left:889.00px;top:518px;font-size:12px;transform:scaleX(0.9174);color:#141414;">Channel 4 / Effect 2</div>
<div style="position:absolute;left:891px;top:538px;width:138px;height:21px;box-sizing:border-box;border:1px solid #6a6a6a;border-radius:1px;background:linear-gradient(#dcdcdc 0,#dcdcdc 8px,#cecece 8px,#cecece 100%);box-shadow:inset 1px 1px 0 #e4e4e4;"></div>
<div class="t" style="left:894.00px;top:542px;font-size:12px;transform:scaleX(0.9313);color:#141414;">None / Blackout</div>
<svg style="position:absolute;left:1017px;top:547px" width="7" height="4"><path d="M0,0 H7 L3.5,4 Z" fill="#1a1a1a"/></svg>
<div class="t" style="left:890.00px;top:571px;font-size:12px;transform:scaleX(0.9078);color:#141414;">Speed</div>
<div style="position:absolute;left:939px;top:576px;width:81px;height:5px;box-sizing:border-box;border:1px solid #606060;border-radius:2px;background:linear-gradient(#e6e6e6 0,#e6e6e6 50%,#dcdcdc 50%);"></div>
<div style="position:absolute;left:1010px;top:568px;width:10px;height:21px;box-sizing:border-box;border:1px solid #5c5c5c;border-radius:1.5px;background:linear-gradient(#dadada 0,#dadada 9px,#c9c9c9 9px);box-shadow:inset 1px 1px 0 #e4e4e4;"></div>
<div style="position:absolute;left:891px;top:597px;width:50px;height:21px;box-sizing:border-box;border:1px solid #6a6a6a;border-radius:1.5px;background:linear-gradient(#dcdcdc 0,#dcdcdc 9px,#cbcbcb 9px,#cbcbcb 100%);box-shadow:inset 1px 1px 0 #e6e6e6, inset -1px -1px 0 #d6d6d6;"></div>
<div class="t" style="left:906.65px;top:601px;font-size:12px;transform:scaleX(0.8801);color:#141414;">Edit</div>
<div style="position:absolute;left:943px;top:597px;width:20px;height:21px;box-sizing:border-box;border:1px solid #6a6a6a;border-radius:1.5px;background:linear-gradient(#dcdcdc 0,#dcdcdc 9px,#cbcbcb 9px,#cbcbcb 100%);box-shadow:inset 1px 1px 0 #e6e6e6, inset -1px -1px 0 #d6d6d6;"></div>
<div class="t" style="left:948.50px;top:601px;font-size:12px;transform:scaleX(0.9808);color:#141414;">R</div>
<div style="position:absolute;left:981px;top:601px;width:13px;height:13px;box-sizing:border-box;border:1px solid #5e5e5e;border-radius:1px;background:#d6d6d6;box-shadow:inset 1px 1px 0 #e0e0e0;"></div>
<div class="t" style="left:998.00px;top:601px;font-size:12px;transform:scaleX(0.9163);color:#141414;">Invert</div>
<div style="position:absolute;left:719px;top:636px;width:320px;height:45px;box-sizing:border-box;border:1px solid #000099;border-radius:2px;"></div>
<div style="position:absolute;left:725px;top:635px;width:74.5px;height:3px;background:#a0a0a0"></div>
<div class="t" style="left:727.00px;top:630px;font-size:12px;transform:scaleX(0.8995);color:#141414;">Channel 4 Mix</div>
<div style="position:absolute;left:729px;top:650px;width:130px;height:21px;box-sizing:border-box;border:1px solid #6a6a6a;border-radius:1px;background:linear-gradient(#dcdcdc 0,#dcdcdc 8px,#cecece 8px,#cecece 100%);box-shadow:inset 1px 1px 0 #e4e4e4;"></div>
<div class="t" style="left:732.00px;top:654px;font-size:12px;transform:scaleX(0.8681);color:#141414;">Progressive</div>
<svg style="position:absolute;left:847px;top:659px" width="7" height="4"><path d="M0,0 H7 L3.5,4 Z" fill="#1a1a1a"/></svg>
<div style="position:absolute;left:869px;top:650px;width:20px;height:21px;box-sizing:border-box;border:1px solid #6a6a6a;border-radius:1.5px;background:linear-gradient(#dcdcdc 0,#dcdcdc 9px,#cbcbcb 9px,#cbcbcb 100%);box-shadow:inset 1px 1px 0 #e6e6e6, inset -1px -1px 0 #d6d6d6;"></div>
<div style="position:absolute;left:878px;top:656px;width:1px;height:10px;box-sizing:border-box;background:#b88446;"></div>
<div style="position:absolute;left:879px;top:656px;width:1px;height:10px;box-sizing:border-box;background:#5e96d6;"></div>
<div style="position:absolute;left:907px;top:658px;width:113px;height:5px;box-sizing:border-box;border:1px solid #606060;border-radius:2px;background:linear-gradient(#e6e6e6 0,#e6e6e6 50%,#dcdcdc 50%);"></div>
<div style="position:absolute;left:959px;top:650px;width:10px;height:21px;box-sizing:border-box;border:1px solid #5c5c5c;border-radius:1.5px;background:linear-gradient(#dadada 0,#dadada 9px,#c9c9c9 9px);box-shadow:inset 1px 1px 0 #e4e4e4;"></div>
<div style="position:absolute;left:369px;top:277px;width:320px;height:104px;box-sizing:border-box;border:1px solid #999900;border-radius:2px;"></div>
<div style="position:absolute;left:375.3px;top:276px;width:48.6px;height:3px;background:#a0a0a0"></div>
<div class="t" style="left:377.30px;top:271px;font-size:12px;transform:scaleX(0.8978);color:#141414;">Main Mix</div>
<div style="position:absolute;left:379px;top:291px;width:217px;height:21px;box-sizing:border-box;border:1px solid #6a6a6a;border-radius:1px;background:linear-gradient(#dcdcdc 0,#dcdcdc 8px,#cecece 8px,#cecece 100%);box-shadow:inset 1px 1px 0 #e4e4e4;"></div>
<div class="t" style="left:382.00px;top:295px;font-size:12px;transform:scaleX(0.8681);color:#141414;">Progressive</div>
<svg style="position:absolute;left:584px;top:300px" width="7" height="4"><path d="M0,0 H7 L3.5,4 Z" fill="#1a1a1a"/></svg>
<div style="position:absolute;left:609px;top:291px;width:20px;height:21px;box-sizing:border-box;border:1px solid #6a6a6a;border-radius:1.5px;background:linear-gradient(#dcdcdc 0,#dcdcdc 9px,#cbcbcb 9px,#cbcbcb 100%);box-shadow:inset 1px 1px 0 #e6e6e6, inset -1px -1px 0 #d6d6d6;"></div>
<svg style="position:absolute;left:0;top:0;overflow:visible" width="1" height="1"><path d="M622.0,299.5 L616.0,303.0 L622.0,306.5" fill="none" stroke="#3a3a50" stroke-width="1"/></svg>
<div style="position:absolute;left:634px;top:291px;width:20px;height:21px;box-sizing:border-box;border:1px solid #6a6a6a;border-radius:1.5px;background:linear-gradient(#dcdcdc 0,#dcdcdc 9px,#cbcbcb 9px,#cbcbcb 100%);box-shadow:inset 1px 1px 0 #e6e6e6, inset -1px -1px 0 #d6d6d6;"></div>
<div style="position:absolute;left:643px;top:297px;width:1px;height:10px;box-sizing:border-box;background:#b88446;"></div>
<div style="position:absolute;left:644px;top:297px;width:1px;height:10px;box-sizing:border-box;background:#5e96d6;"></div>
<div style="position:absolute;left:659px;top:291px;width:20px;height:21px;box-sizing:border-box;border:1px solid #6a6a6a;border-radius:1.5px;background:linear-gradient(#dcdcdc 0,#dcdcdc 9px,#cbcbcb 9px,#cbcbcb 100%);box-shadow:inset 1px 1px 0 #e6e6e6, inset -1px -1px 0 #d6d6d6;"></div>
<svg style="position:absolute;left:0;top:0;overflow:visible" width="1" height="1"><path d="M666.0,299.5 L672.0,303.0 L666.0,306.5" fill="none" stroke="#3a3a50" stroke-width="1"/></svg>
<div style="position:absolute;left:387px;top:329px;width:283px;height:5px;box-sizing:border-box;border:1px solid #606060;border-radius:2px;background:linear-gradient(#e6e6e6 0,#e6e6e6 50%,#dcdcdc 50%);"></div>
<div style="position:absolute;left:524px;top:321px;width:10px;height:21px;box-sizing:border-box;border:1px solid #5c5c5c;border-radius:1.5px;background:linear-gradient(#dadada 0,#dadada 9px,#c9c9c9 9px);box-shadow:inset 1px 1px 0 #e4e4e4;"></div>
<div class="t" style="left:379.20px;top:354px;font-size:12px;transform:scaleX(0.9008);color:#141414;">Auto Speed</div>
<div style="position:absolute;left:462px;top:359px;width:208px;height:5px;box-sizing:border-box;border:1px solid #606060;border-radius:2px;background:linear-gradient(#e6e6e6 0,#e6e6e6 50%,#dcdcdc 50%);"></div>
<div style="position:absolute;left:482px;top:351px;width:10px;height:21px;box-sizing:border-box;border:1px solid #5c5c5c;border-radius:1.5px;background:linear-gradient(#dadada 0,#dadada 9px,#c9c9c9 9px);box-shadow:inset 1px 1px 0 #e4e4e4;"></div>
<div style="position:absolute;left:369px;top:524px;width:100px;height:31px;box-sizing:border-box;border:1px solid #6a6a6a;border-radius:1.5px;background:linear-gradient(#dcdcdc 0,#dcdcdc 14px,#cbcbcb 14px,#cbcbcb 100%);box-shadow:inset 1px 1px 0 #e6e6e6, inset -1px -1px 0 #d6d6d6;"></div>
<div class="t" style="left:400.45px;top:533px;font-size:12px;transform:scaleX(0.9144);color:#141414;">Scenes</div>
<div style="position:absolute;left:479px;top:524px;width:100px;height:31px;box-sizing:border-box;border:1px solid #6a6a6a;border-radius:1.5px;background:linear-gradient(#dcdcdc 0,#dcdcdc 14px,#cbcbcb 14px,#cbcbcb 100%);box-shadow:inset 1px 1px 0 #e6e6e6, inset -1px -1px 0 #d6d6d6;"></div>
<div class="t" style="left:510.50px;top:533px;font-size:12px;transform:scaleX(0.8970);color:#141414;">Chases</div>
<div style="position:absolute;left:589px;top:524px;width:100px;height:31px;box-sizing:border-box;border:1px solid #6a6a6a;border-radius:1.5px;background:linear-gradient(#dcdcdc 0,#dcdcdc 14px,#cbcbcb 14px,#cbcbcb 100%);box-shadow:inset 1px 1px 0 #e6e6e6, inset -1px -1px 0 #d6d6d6;"></div>
<div class="t" style="left:609.90px;top:533px;font-size:12px;transform:scaleX(0.9105);color:#141414;">Show Mode</div>
<div style="position:absolute;left:369px;top:571px;width:320px;height:110px;box-sizing:border-box;border:1px solid #d2d2d2;border-radius:3px;"></div>
<div style="position:absolute;left:375.6px;top:570px;width:38px;height:3px;background:#a0a0a0"></div>
<div class="t" style="left:377.60px;top:565px;font-size:12px;transform:scaleX(0.8862);color:#141414;">Master</div>
<div class="t" style="left:378.40px;top:588px;font-size:12px;transform:scaleX(0.8857);color:#141414;">Strobe Time</div>
<div style="position:absolute;left:462px;top:593px;width:130px;height:5px;box-sizing:border-box;border:1px solid #606060;border-radius:2px;background:linear-gradient(#e6e6e6 0,#e6e6e6 50%,#dcdcdc 50%);"></div>
<div style="position:absolute;left:462px;top:585px;width:10px;height:21px;box-sizing:border-box;border:1px solid #5c5c5c;border-radius:1.5px;background:linear-gradient(#dadada 0,#dadada 9px,#c9c9c9 9px);box-shadow:inset 1px 1px 0 #e4e4e4;"></div>
<div style="position:absolute;left:607px;top:585px;width:72px;height:21px;box-sizing:border-box;border:1px solid #6a6a6a;border-radius:1.5px;background:linear-gradient(#dcdcdc 0,#dcdcdc 9px,#cbcbcb 9px,#cbcbcb 100%);box-shadow:inset 1px 1px 0 #e6e6e6, inset -1px -1px 0 #d6d6d6;"></div>
<div class="t" style="left:627.00px;top:589px;font-size:12px;transform:scaleX(0.8909);color:#141414;">Strobe</div>
<div class="t" style="left:378.00px;top:621px;font-size:12px;transform:scaleX(0.8726);color:#141414;">Gamma (1.00)</div>
<div style="position:absolute;left:462px;top:626px;width:208px;height:5px;box-sizing:border-box;border:1px solid #606060;border-radius:2px;background:linear-gradient(#e6e6e6 0,#e6e6e6 50%,#dcdcdc 50%);"></div>
<div style="position:absolute;left:501px;top:618px;width:10px;height:21px;box-sizing:border-box;border:1px solid #5c5c5c;border-radius:1.5px;background:linear-gradient(#dadada 0,#dadada 9px,#c9c9c9 9px);box-shadow:inset 1px 1px 0 #e4e4e4;"></div>
<div class="t" style="left:378.40px;top:654px;font-size:12px;transform:scaleX(0.8862);color:#141414;">Master</div>
<div style="position:absolute;left:462px;top:659px;width:208px;height:5px;box-sizing:border-box;border:1px solid #606060;border-radius:2px;background:linear-gradient(#e6e6e6 0,#e6e6e6 50%,#dcdcdc 50%);"></div>
<div style="position:absolute;left:660px;top:651px;width:10px;height:21px;box-sizing:border-box;border:1px solid #5c5c5c;border-radius:1.5px;background:linear-gradient(#dadada 0,#dadada 9px,#c9c9c9 9px);box-shadow:inset 1px 1px 0 #e4e4e4;"></div>
</body></html>
